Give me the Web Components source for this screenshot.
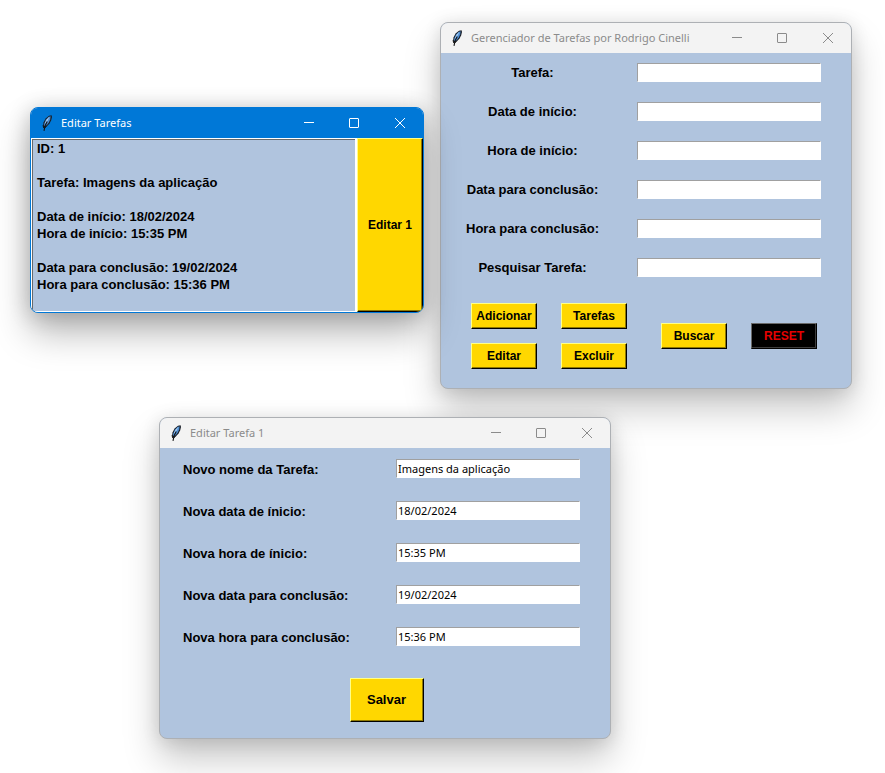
<!DOCTYPE html>
<html lang="pt-BR">
<head>
<meta charset="utf-8">
<meta name="viewport" content="width=device-width, initial-scale=1">
<title>Gerenciador de Tarefas</title>
<style>
  html, body { margin: 0; min-height: 100%; background: #fff; }
  body { font-family: "Liberation Sans", Arial, sans-serif; }
</style>
</head>
<body>
<task-desktop></task-desktop>

<template id="feather-tpl">
  <style>
    :host { display: block; width: 16px; height: 16px; }
    svg { display: block; }
  </style>
  <svg width="16" height="16" viewBox="0 0 16 16" aria-hidden="true">
    <path d="M12.6.2 10 .8 6.6 3.6 4.6 7.2 4 10.8 5 12.6 7.8 11.6 10.6 8.6 12.2 5.2 13 2Z" fill="#1a1f28"/>
    <path d="M11.6 1.2 9.6 2 6.9 4.8 5.4 8.2 5 10.4 5.8 11.2 7.8 10 9.8 7.4 11.2 4.6Z" fill="#4f8fd4"/>
    <path d="M10.4 1.8 7.6 4.8 5.8 8.8 7.4 7.4 9 4.8Z" fill="#b4d4f4"/>
    <path d="M8.2 6.6 6 11 5 15.8" fill="none" stroke="#111" stroke-width="1.1"/>
    <path d="M4 10.4 4.8 13M7.4 11.6 5.8 12.8" fill="none" stroke="#111" stroke-width="1"/>
  </svg>
</template>

<template id="window-tpl">
  <style>
    :host {
      --bar: #f3f3f3; --ink: #8b8b8b; --edge: #adb0b4;
      display: block; box-sizing: border-box; overflow: hidden;
      border: 1px solid var(--edge); border-radius: 8px;
      background: #b0c4de;
      box-shadow: 0 20px 36px rgba(0,0,0,.22), 0 2px 18px rgba(0,0,0,.12);
    }
    :host([active]) {
      --bar: #0078d7; --ink: #fff; --edge: #0078d7;
      box-shadow: 0 20px 36px rgba(0,0,0,.28), 0 2px 22px rgba(0,0,0,.2);
    }
    header { display: flex; align-items: center; height: 30px; background: var(--bar); color: var(--ink); }
    task-feather { margin: 0 6px 0 8px; flex: none; }
    h2 { flex: 1; min-width: 0; margin: 0; font: 400 11px/16px "Noto Sans", "Open Sans", sans-serif; white-space: nowrap; }
    nav { display: flex; flex: none; }
    button { display: grid; place-items: center; width: 46px; height: 30px; padding: 0; border: 0; background: none; color: inherit; }
    svg { display: block; fill: none; stroke: currentColor; stroke-width: 1; }
  </style>
  <header>
    <task-feather></task-feather>
    <h2></h2>
    <nav>
      <button type="button" aria-label="Minimizar"><svg width="12" height="12"><path d="M2 5.5H12"/></svg></button>
      <button type="button" aria-label="Maximizar"><svg width="12" height="12"><rect x="1.5" y="1.5" width="9" height="9" rx=".5"/></svg></button>
      <button type="button" aria-label="Fechar"><svg width="12" height="12"><path d="M1 1 11 11M11 1 1 11"/></svg></button>
    </nav>
  </header>
  <slot></slot>
</template>

<template id="field-tpl">
  <style>
    :host { display: grid; grid-template-columns: var(--label-col, 183px) minmax(0, 1fr); column-gap: 13px; align-items: start; box-sizing: border-box; height: var(--row, 39px); padding-top: var(--row-top, 10px); }
    label { font: 700 13px/var(--label-line, 19px) "Liberation Sans", Arial, sans-serif; color: #000; text-align: var(--label-align, center); white-space: nowrap; }
    input {
      box-sizing: border-box; width: 100%; height: 19px; margin: 0; padding: 0 1px;
      border: 1px solid #fff; border-top-color: #a0a0a0; border-left-color: #a0a0a0; border-radius: 0;
      background: #fff; color: #000; font: 400 11px/16px "Noto Sans", "Open Sans", sans-serif; outline: none;
    }
  </style>
  <label for="f"></label>
  <input id="f" type="text">
</template>

<template id="button-tpl">
  <style>
    :host { display: block; }
    button {
      box-sizing: border-box; width: 100%; height: 100%; margin: 0; padding: 0; border-radius: 0;
      border: 1px solid #000; border-top-color: #ffff88; border-left-color: #ffff88;
      box-shadow: inset -1px -1px 0 #8f7900;
      background: #ffd700; color: #000; white-space: nowrap;
      font: 700 var(--size, 12px)/16px "Liberation Sans", Arial, sans-serif;
    }
    :host([dark]) button { background: #000; color: #e60000; border-top-color: #696969; border-left-color: #696969; box-shadow: inset -1px -1px 0 #3c3c3c; }
  </style>
  <button type="button"><slot></slot></button>
</template>

<template id="details-tpl">
  <style>
    :host { display: grid; grid-template-columns: minmax(0, 1fr) 66px; }
    textarea {
      display: block; box-sizing: border-box; width: 100%; height: 174px; margin: 0; padding: 1px 5px 0; resize: none; overflow: hidden;
      border: 1px solid #fff; border-right-width: 2px; border-radius: 0; box-shadow: inset 1px 1px 0 #696969; outline: none;
      background: #b0c4de; color: #000; font: 700 13px/17px "Liberation Sans", Arial, sans-serif;
    }
  </style>
  <textarea readonly aria-label="Detalhes da tarefa">ID: 1

Tarefa: Imagens da aplicação

Data de início: 18/02/2024
Hora de início: 15:35 PM

Data para conclusão: 19/02/2024
Hora para conclusão: 15:36 PM</textarea>
  <task-button>Editar 1</task-button>
</template>

<template id="manager-tpl">
  <style>
    :host { display: block; padding: 0 30px 19px 0; }
    .actions { display: flex; align-items: center; justify-content: space-between; padding: 16px 4px 0 30px; }
    .grid { display: grid; grid-template-columns: repeat(2, 66px); grid-auto-rows: 26px; gap: 14px 24px; }
  </style>
  <task-field label="Tarefa:"></task-field>
  <task-field label="Data de início:"></task-field>
  <task-field label="Hora de início:"></task-field>
  <task-field label="Data para conclusão:"></task-field>
  <task-field label="Hora para conclusão:"></task-field>
  <task-field label="Pesquisar Tarefa:"></task-field>
  <div class="actions">
    <div class="grid">
      <task-button>Adicionar</task-button><task-button>Tarefas</task-button>
      <task-button>Editar</task-button><task-button>Excluir</task-button>
    </div>
    <div class="grid">
      <task-button>Buscar</task-button><task-button dark>RESET</task-button>
    </div>
  </div>
</template>

<template id="edit-tpl">
  <style>
    :host { display: block; padding: 0 30px 16px 23px; --label-col: 200px; --row: 42px; --row-top: 11px; --label-line: 21px; --label-align: left; }
    task-button { width: 74px; height: 44px; margin: 20px 0 0 calc(50% - 32px); --size: 13px; }
  </style>
  <task-field label="Novo nome da Tarefa:" value="Imagens da aplicação"></task-field>
  <task-field label="Nova data de ínicio:" value="18/02/2024"></task-field>
  <task-field label="Nova hora de ínicio:" value="15:35 PM"></task-field>
  <task-field label="Nova data para conclusão:" value="19/02/2024"></task-field>
  <task-field label="Nova hora para conclusão:" value="15:36 PM"></task-field>
  <task-button>Salvar</task-button>
</template>

<template id="desktop-tpl">
  <style>
    :host { display: block; position: relative; min-height: 100vh; overflow: hidden; }
    task-window { position: absolute; }
    .details { left: 30px; right: 461px; top: 107px; }
    .manager { left: 440px; right: 33px; top: 22px; }
    .edit { left: 159px; right: 274px; top: 417px; }
  </style>
  <task-window class="manager" heading="Gerenciador de Tarefas por Rodrigo Cinelli"><task-manager></task-manager></task-window>
  <task-window class="details" heading="Editar Tarefas" active><task-details></task-details></task-window>
  <task-window class="edit" heading="Editar Tarefa 1"><task-edit></task-edit></task-window>
</template>

<script>
  class TemplateElement extends HTMLElement {
    constructor() {
      super();
      const tpl = document.getElementById(this.constructor.template);
      this.attachShadow({ mode: "open" }).append(tpl.content.cloneNode(true));
    }
  }
  class TaskFeather extends TemplateElement { static template = "feather-tpl"; }
  class TaskButton extends TemplateElement { static template = "button-tpl"; }
  class TaskWindow extends TemplateElement {
    static template = "window-tpl";
    connectedCallback() { this.shadowRoot.querySelector("h2").textContent = this.getAttribute("heading"); }
  }
  class TaskField extends TemplateElement {
    static template = "field-tpl";
    connectedCallback() {
      this.shadowRoot.querySelector("label").textContent = this.getAttribute("label");
      this.shadowRoot.querySelector("input").value = this.getAttribute("value") || "";
    }
  }
  class TaskDetails extends TemplateElement { static template = "details-tpl"; }
  class TaskManager extends TemplateElement { static template = "manager-tpl"; }
  class TaskEdit extends TemplateElement { static template = "edit-tpl"; }
  class TaskDesktop extends TemplateElement { static template = "desktop-tpl"; }

  customElements.define("task-feather", TaskFeather);
  customElements.define("task-button", TaskButton);
  customElements.define("task-window", TaskWindow);
  customElements.define("task-field", TaskField);
  customElements.define("task-details", TaskDetails);
  customElements.define("task-manager", TaskManager);
  customElements.define("task-edit", TaskEdit);
  customElements.define("task-desktop", TaskDesktop);
</script>
</body>
</html>
